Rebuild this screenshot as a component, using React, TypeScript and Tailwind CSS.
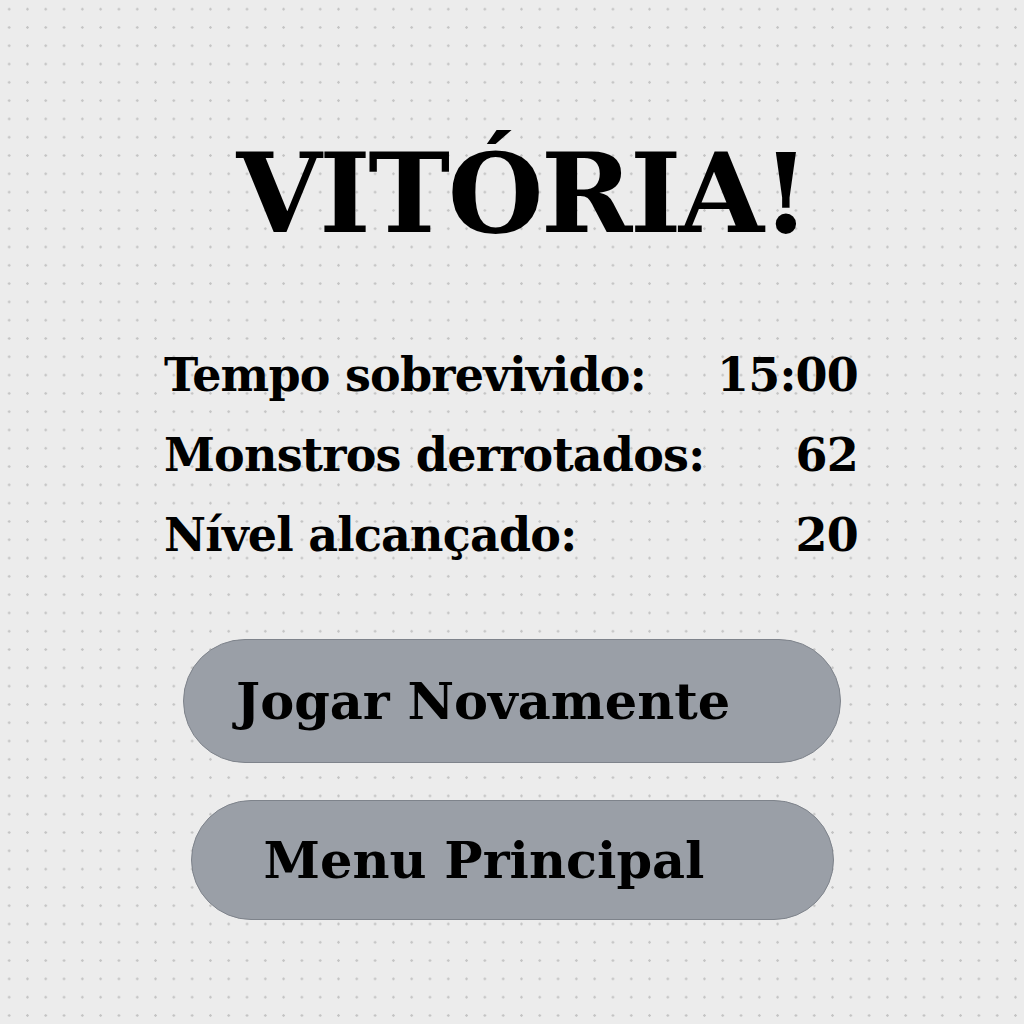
import React from 'react';

const stats = [
  { label: 'Tempo sobrevivido:', value: '15:00' },
  { label: 'Monstros derrotados:', value: '62' },
  { label: 'Nível alcançado:', value: '20' },
];

const serif = { fontFamily: '"DejaVu Serif", "Liberation Serif", serif' };

export default function App() {
  return (
    <div
      className="w-[1024px] h-[1024px] bg-[#ececec] bg-[radial-gradient(circle,#c4c4c4_1.2px,transparent_1.4px)] bg-[length:18.3px_18.3px] bg-[position:0px_0px] flex flex-col items-center text-black"
      style={serif}
    >
      <h1 className="mt-[139px] ml-[20px] text-[110px] leading-none font-bold tracking-[-2.5px]">VITÓRIA!</h1>

      <div className="mt-[98px] w-[694px] ml-[-2px] flex flex-col gap-[24px]">
        {stats.map((s) => (
          <div key={s.label} className="flex justify-between items-baseline text-[46px] leading-[56px] font-bold tracking-[-0.8px]">
            <span>{s.label}</span>
            <span>{s.value}</span>
          </div>
        ))}
      </div>

      <div className="mt-[76px] flex flex-col items-center gap-[37px]">
        <button className="w-[658px] h-[124px] rounded-full bg-[#9a9fa7] border border-[#7e838b] text-[51px] font-bold text-left pl-[52px]">
          Jogar Novamente
        </button>
        <button className="w-[643px] h-[120px] rounded-full bg-[#9a9fa7] border border-[#7e838b] text-[51px] font-bold text-left pl-[72px]">
          Menu Principal
        </button>
      </div>
    </div>
  );
}
